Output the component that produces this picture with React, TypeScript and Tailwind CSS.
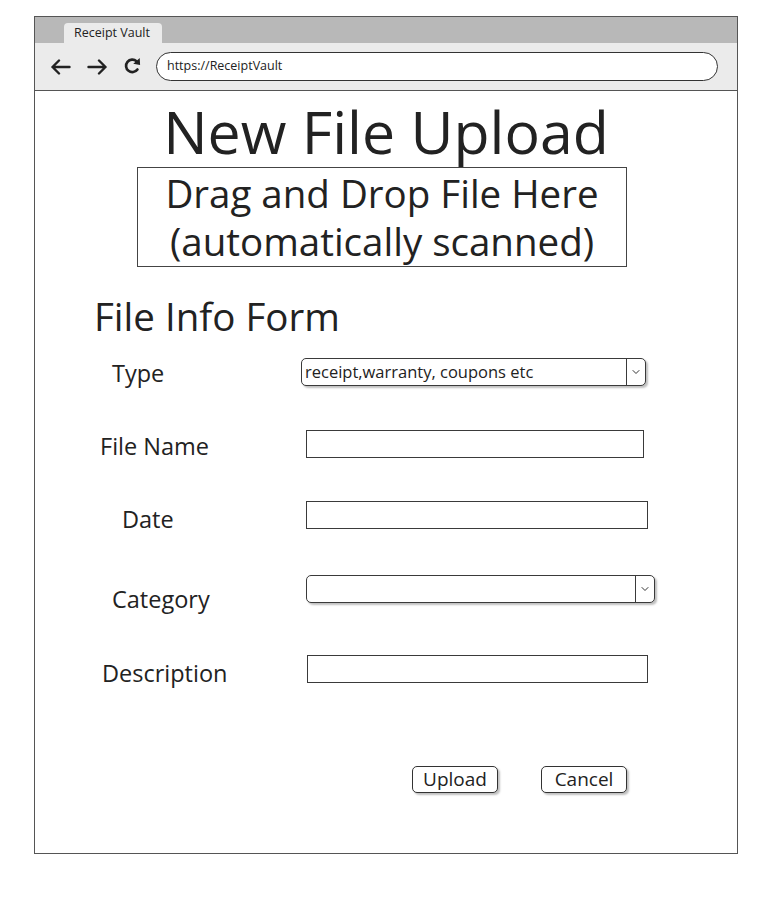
import { ChevronDown } from "lucide-react";

const font = "font-['Open_Sans',sans-serif]";

function Arrow({ dir }: { dir: "left" | "right" }) {
  return (
    <svg width="20" height="16" viewBox="0 0 20 16" fill="none" stroke="#222" strokeWidth="2.4" strokeLinecap="round" strokeLinejoin="round">
      {dir === "left" ? (
        <path d="M1.5 8H18.5M8 1.5L1.5 8L8 14.5" />
      ) : (
        <path d="M1.5 8H18.5M12 1.5L18.5 8L12 14.5" />
      )}
    </svg>
  );
}

function Refresh() {
  return (
    <svg width="19" height="19" viewBox="0 0 20 20" fill="none">
      <path d="M15.2 14.2A6.6 6.6 0 1 1 14.2 5.4" stroke="#222" strokeWidth="2.8" strokeLinecap="round" />
      <path d="M17.6 2.2L18 9.4L10.8 8.2Z" fill="#222" />
    </svg>
  );
}

function TextBox({ width }: { width: number }) {
  return <div className="h-[28px] border-[1.5px] border-[#3a3a3a] bg-white" style={{ width }} />;
}

function Select({ width, value }: { width: number; value?: string }) {
  return (
    <div
      className="flex h-[28px] items-stretch rounded-[5px] border-[1.5px] border-[#3a3a3a] bg-white shadow-[2px_2px_2px_rgba(0,0,0,0.25)]"
      style={{ width }}
    >
      <div className="flex flex-1 items-center pl-[3px] text-[16.5px] leading-none text-[#222]">{value}</div>
      <div className="flex w-[19px] items-center justify-center border-l-[1.5px] border-[#3a3a3a]">
        <ChevronDown size={12} strokeWidth={2} className="text-[#333]" />
      </div>
    </div>
  );
}

export default function App() {
  return (
    <div className={`min-h-[924px] bg-white pt-[16px] ${font} text-[#222]`}>
      {/* browser frame */}
      <div className="ml-[34px] flex h-[838px] w-[704px] flex-col border-[1.5px] border-[#555]">
        {/* tab strip */}
        <div className="flex h-[26px] items-end bg-[#b8b8b8] pl-[29px]">
          <div className="flex h-[20px] w-[98px] items-center rounded-t-[4px] bg-[#ebebeb] pl-[10px] text-[12.5px]">
            Receipt Vault
          </div>
        </div>
        {/* toolbar */}
        <div className="flex h-[48px] items-center border-b-[1.5px] border-[#555] bg-[#ebebeb] pl-[16px]">
          <Arrow dir="left" />
          <div className="ml-[16px]">
            <Arrow dir="right" />
          </div>
          <div className="ml-[16px] mt-[-2px]">
            <Refresh />
          </div>
          <div className="ml-[14px] flex h-[29px] w-[562px] items-center rounded-full border-[1.5px] border-[#333] bg-white pl-[10px] text-[12.5px]">
            https://ReceiptVault
          </div>
        </div>

        {/* page */}
        <div className="flex flex-col">
          <h1 className="mt-[7px] text-center text-[59px] leading-[66px]">New File Upload</h1>
          <div className="ml-[102px] mt-[3px] flex h-[100px] w-[490px] flex-col items-center justify-center border-[1.5px] border-[#444] text-[38.5px] leading-[48px]">
            <div>Drag and Drop File Here</div>
            <div>(automatically scanned)</div>
          </div>

          <h2 className="ml-[59px] mt-[26px] text-[38.5px] leading-[46px]">File Info Form</h2>

          <div className="mt-[19px] flex h-[28px] items-start">
            <div className="ml-[77px] w-[189px] shrink-0 text-[23.5px] leading-[30px]">Type</div>
            <Select width={345} value="receipt,warranty, coupons etc" />
          </div>

          <div className="mt-[44px] flex h-[28px] items-start">
            <div className="ml-[65px] mt-[1px] w-[206px] shrink-0 text-[23.5px] leading-[30px]">File Name</div>
            <TextBox width={338} />
          </div>

          <div className="mt-[43px] flex h-[28px] items-start">
            <div className="ml-[87px] mt-[3px] w-[184px] shrink-0 text-[23.5px] leading-[30px]">Date</div>
            <TextBox width={342} />
          </div>

          <div className="mt-[46px] flex h-[28px] items-start">
            <div className="ml-[77px] mt-[9px] w-[194px] shrink-0 text-[23.5px] leading-[30px]">Category</div>
            <Select width={349} />
          </div>

          <div className="mt-[52px] flex h-[28px] items-start">
            <div className="ml-[67px] mt-[3px] w-[205px] shrink-0 text-[23.5px] leading-[30px]">Description</div>
            <TextBox width={341} />
          </div>

          <div className="ml-[377px] mt-[83px] flex gap-[43px]">
            <button className="h-[27px] w-[86px] rounded-[5px] border-[1.5px] border-[#333] bg-white text-[19px] leading-none shadow-[2px_2px_2px_rgba(0,0,0,0.25)]">
              Upload
            </button>
            <button className="h-[27px] w-[86px] rounded-[5px] border-[1.5px] border-[#333] bg-white text-[19px] leading-none shadow-[2px_2px_2px_rgba(0,0,0,0.25)]">
              Cancel
            </button>
          </div>
        </div>
      </div>
    </div>
  );
}
